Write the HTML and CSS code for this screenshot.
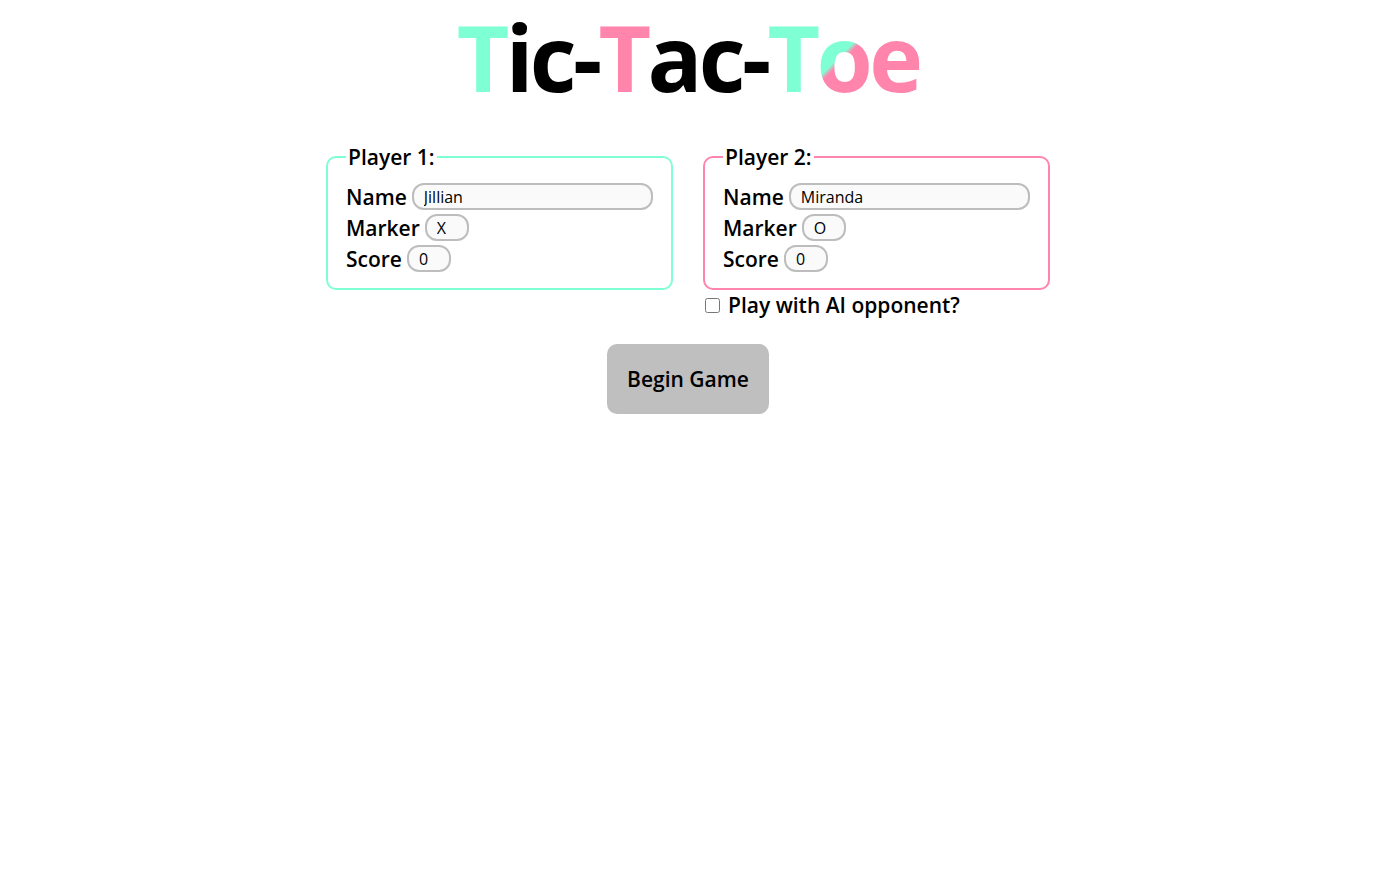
FILE: index.html
```html
<!DOCTYPE html>
<html>
<head>
<meta charset="utf-8">
<link rel="stylesheet" href="styles.css">
</head>
<body>
<h1 class="title"><span class="aqua">T</span>ic-<span class="pink">T</span>ac-<span class="aqua">T</span><span class="mix">o</span><span class="pink">e</span></h1>
<div class="players">
  <div class="col">
    <fieldset class="player p1">
      <legend>Player 1:</legend>
      <div class="row"><label>Name</label><input class="name" type="text" value="Jillian"></div>
      <div class="row"><label>Marker</label><input class="small" type="text" value="X"></div>
      <div class="row"><label>Score</label><input class="small" type="text" value="0"></div>
    </fieldset>
  </div>
  <div class="col">
    <fieldset class="player p2">
      <legend>Player 2:</legend>
      <div class="row"><label>Name</label><input class="name" type="text" value="Miranda"></div>
      <div class="row"><label>Marker</label><input class="small" type="text" value="O"></div>
      <div class="row"><label>Score</label><input class="small" type="text" value="0"></div>
    </fieldset>
    <label class="ai"><input type="checkbox"> Play with AI opponent?</label>
  </div>
</div>
<div class="actions"><button class="begin">Begin Game</button></div>
</body>
</html>
```
FILE: styles.css
```css
body {
  margin: 0;
  font-family: "Open Sans", "Noto Sans", sans-serif;
  color: #000;
  background: #fff;
}
.title {
  margin: 2px 0 0;
  text-align: center;
  font-size: 91px;
  font-weight: 700;
  line-height: 110px;
  letter-spacing: -3.7px;
}
.aqua { color: #7fffd4; }
.pink { color: #ff85ad; }
.mix {
  background: linear-gradient(135deg, #7fffd4 0%, #7fffd4 48%, #ff85ad 52%, #ff85ad 100%);
  -webkit-background-clip: text;
  background-clip: text;
  color: transparent;
}
.players {
  display: flex;
  justify-content: center;
  gap: 30px;
  margin-top: 31px;
}
.col {
  width: 347px;
}
.player {
  margin: 0;
  min-width: 0;
  padding: 10px 18px 14px;
  border: 2px solid #7fffd4;
  border-radius: 10px;
}
.player.p2 { border-color: #ff85ad; }
.player legend {
  font-size: 21px;
  padding: 0 2px;
  font-weight: 600;
}
.row {
  display: flex;
  align-items: center;
  height: 31px;
}
.row label {
  font-size: 21px;
  font-weight: 600;
  margin-right: 5px;
}
.row input {
  height: 27px;
  box-sizing: border-box;
  border: 2px solid #bdbdbd;
  border-radius: 12px;
  background: #fafafa;
  font-family: inherit;
  font-size: 16px;
  padding: 0 10px;
  outline: none;
}
.row input.name { flex: 1; min-width: 0; }
.row input.small { width: 44px; }
.ai {
  display: flex;
  align-items: center;
  margin-top: 1px;
  font-size: 21px;
  font-weight: 600;
}
.ai input {
  margin: 0 8px 0 2px;
  width: 15px;
  height: 15px;
}
.actions {
  display: flex;
  justify-content: center;
  margin-top: 25px;
}
.begin {
  width: 162px;
  height: 70px;
  border: none;
  border-radius: 10px;
  background: #bfbfbf;
  font-family: inherit;
  font-size: 21px;
  font-weight: 600;
  color: #000;
}
```
